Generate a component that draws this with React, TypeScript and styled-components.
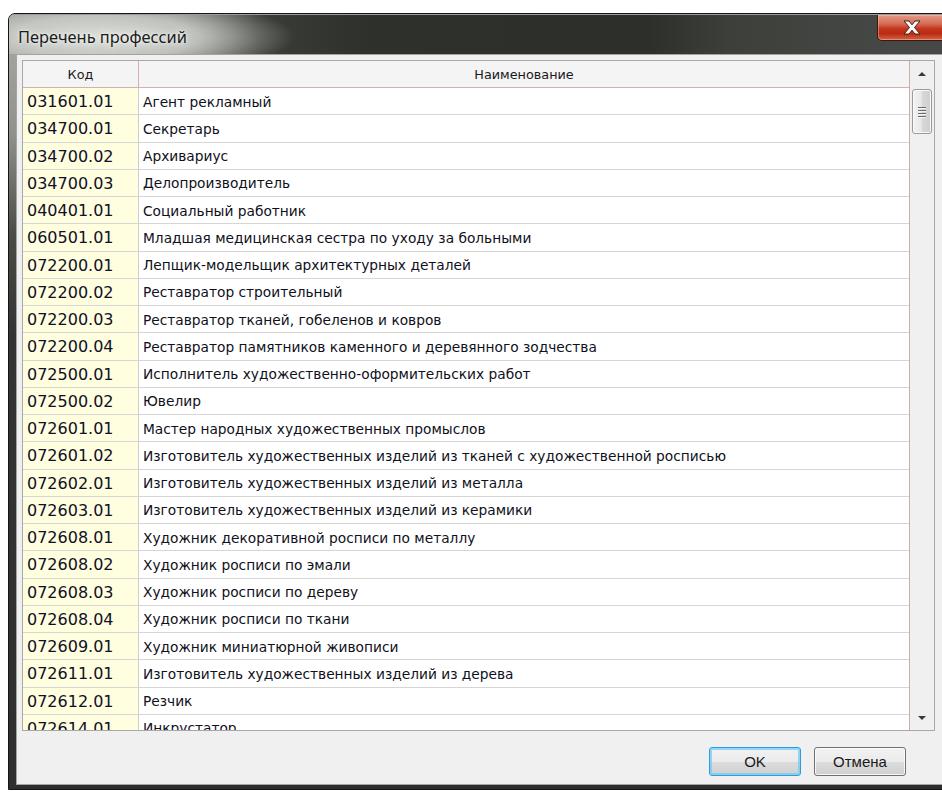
import React from 'react'
import styled, { createGlobalStyle } from 'styled-components'

interface Profession {
    code: string
    name: string
}

const professions: Profession[] = [
    { code: '031601.01', name: 'Агент рекламный' },
    { code: '034700.01', name: 'Секретарь' },
    { code: '034700.02', name: 'Архивариус' },
    { code: '034700.03', name: 'Делопроизводитель' },
    { code: '040401.01', name: 'Социальный работник' },
    { code: '060501.01', name: 'Младшая медицинская сестра по уходу за больными' },
    { code: '072200.01', name: 'Лепщик-модельщик архитектурных деталей' },
    { code: '072200.02', name: 'Реставратор строительный' },
    { code: '072200.03', name: 'Реставратор тканей, гобеленов и ковров' },
    { code: '072200.04', name: 'Реставратор памятников каменного и деревянного зодчества' },
    { code: '072500.01', name: 'Исполнитель художественно-оформительских работ' },
    { code: '072500.02', name: 'Ювелир' },
    { code: '072601.01', name: 'Мастер народных художественных промыслов' },
    { code: '072601.02', name: 'Изготовитель художественных изделий из тканей с художественной росписью' },
    { code: '072602.01', name: 'Изготовитель художественных изделий из металла' },
    { code: '072603.01', name: 'Изготовитель художественных изделий из керамики' },
    { code: '072608.01', name: 'Художник декоративной росписи по металлу' },
    { code: '072608.02', name: 'Художник росписи по эмали' },
    { code: '072608.03', name: 'Художник росписи по дереву' },
    { code: '072608.04', name: 'Художник росписи по ткани' },
    { code: '072609.01', name: 'Художник миниатюрной живописи' },
    { code: '072611.01', name: 'Изготовитель художественных изделий из дерева' },
    { code: '072612.01', name: 'Резчик' },
    { code: '072614.01', name: 'Инкрустатор' },
]

const GlobalStyle = createGlobalStyle`
    html, body {
        margin: 0;
        padding: 0;
        background: #ffffff;
        overflow: hidden;
    }
`

const App: React.FC = () => {
    return (
        <>
            <GlobalStyle />
            <Page>
                <Window>
                    <TitleBar>
                        <Title>Перечень профессий</Title>
                        <CloseButton>
                            <svg width="20" height="15" viewBox="0 0 20 15">
                                <path
                                    d="M2 1h5l3 3.8L13 1h5l-5.5 6.5L18 14h-5l-3-3.8L7 14H2l5.5-6.5z"
                                    fill="#ffffff"
                                    stroke="#4a1a10"
                                    strokeWidth="1"
                                    strokeLinejoin="round"
                                />
                            </svg>
                        </CloseButton>
                    </TitleBar>
                    <Client>
                        <GridBox>
                            <TableArea>
                                <HeaderRow>
                                    <HeaderCell>Код</HeaderCell>
                                    <HeaderCell>Наименование</HeaderCell>
                                </HeaderRow>
                                {professions.map(p => (
                                    <Row key={p.code}>
                                        <CodeCell>{p.code}</CodeCell>
                                        <NameCell>{p.name}</NameCell>
                                    </Row>
                                ))}
                            </TableArea>
                            <ScrollBar>
                                <ArrowButton>
                                    <Arrow direction="up" />
                                </ArrowButton>
                                <Thumb>
                                    <Grip />
                                    <Grip />
                                    <Grip />
                                    <Grip />
                                </Thumb>
                                <Track />
                                <ArrowButton>
                                    <Arrow direction="down" />
                                </ArrowButton>
                            </ScrollBar>
                        </GridBox>
                        <ButtonRow>
                            <DialogButton isDefault>OK</DialogButton>
                            <DialogButton>Отмена</DialogButton>
                        </ButtonRow>
                    </Client>
                </Window>
            </Page>
        </>
    )
}

const Page = styled.div`
    width: 942px;
    height: 792px;
    padding: 13px 0 0 8px;
    box-sizing: border-box;
    overflow: hidden;
`

const Window = styled.div`
    width: 946px;
    height: 777px;
    display: flex;
    flex-direction: column;
    box-sizing: border-box;
    border: 1px solid #151515;
    border-radius: 7px 7px 0 0;
    overflow: hidden;
    background: linear-gradient(180deg, #a9aca7 0, #8e918c 120px, #4a4c48 220px, #333532 320px, #2e302d 100%);
`

const TitleBar = styled.div`
    height: 40px;
    flex: none;
    display: flex;
    align-items: flex-start;
    box-sizing: border-box;
    border-top: 1px solid #9a9d98;
    background:
        radial-gradient(ellipse 190px 42px at 95px 22px, rgba(222, 225, 219, 0.97) 0, rgba(205, 208, 202, 0.85) 50%, rgba(190, 193, 188, 0.35) 80%, rgba(190, 193, 188, 0) 100%),
        linear-gradient(90deg, #8f938d 0, #6d716b 170px, #3a3d38 250px, #2d302b 360px, #2c2f2a 640px, #3c3f3a 720px, #464845 880px);
`

const Title = styled.div`
    margin: 10px 0 0 9px;
    font-family: "Noto Sans", "DejaVu Sans", sans-serif;
    font-size: 16.4px;
    color: #1c1c1c;
    text-shadow: 0 0 8px rgba(255, 255, 255, 0.9), 0 0 3px rgba(255, 255, 255, 0.8);
`

const CloseButton = styled.div`
    margin: 0 6px 0 auto;
    width: 70px;
    height: 26px;
    box-sizing: border-box;
    display: flex;
    align-items: center;
    justify-content: center;
    border: 1px solid #3d1710;
    border-top: none;
    border-radius: 0 0 5px 5px;
    background: linear-gradient(180deg, #e49a88 0, #d56d55 35%, #c3351c 55%, #b92c14 75%, #d36645 100%);
    box-shadow: inset 0 0 0 1px rgba(255, 200, 180, 0.45);
`

const Client = styled.div`
    flex: 1;
    display: flex;
    flex-direction: column;
    margin: 0 7px 4px 7px;
    padding: 5px 10px 0 5px;
    background: #f0f0f0;
    border: 1px solid #a3a3a3;
`

const GridBox = styled.div`
    height: 671px;
    flex: none;
    display: flex;
    box-sizing: border-box;
    border: 1px solid #a8a8a8;
    background: #ffffff;
`

const TableArea = styled.div`
    flex: 1;
    overflow: hidden;
    border-right: 1px solid #d2a9a9;
`

const cellColumns = `
    display: grid;
    grid-template-columns: 116px 1fr;
`

const HeaderRow = styled.div`
    ${cellColumns}
    height: 27px;
    box-sizing: border-box;
    border-bottom: 1px solid #d6b0b0;
    background: #f4f4f4;
`

const HeaderCell = styled.div`
    display: flex;
    align-items: center;
    justify-content: center;
    font-family: "DejaVu Sans", sans-serif;
    font-size: 12.8px;
    color: #1a1a1a;

    &:first-child {
        border-right: 1px solid #d6b0b0;
    }
`

const Row = styled.div`
    ${cellColumns}
    height: 27.25px;
    box-sizing: border-box;
    border-bottom: 1px solid #d6d6d6;
`

const CodeCell = styled.div`
    display: flex;
    align-items: center;
    padding: 1px 0 0 4px;
    background: #fffede;
    border-right: 1px solid #cfcfcf;
    font-family: "DejaVu Sans", sans-serif;
    font-size: 16px;
    color: #101028;
    white-space: nowrap;
`

const NameCell = styled.div`
    display: flex;
    align-items: center;
    padding: 1px 0 0 4px;
    font-family: "DejaVu Sans", sans-serif;
    font-size: 13.75px;
    color: #101020;
    white-space: nowrap;
`

const ScrollBar = styled.div`
    width: 24px;
    flex: none;
    display: flex;
    flex-direction: column;
    align-items: center;
    background: #f0f0f0;
`

const ArrowButton = styled.div`
    height: 25px;
    width: 100%;
    flex: none;
    display: flex;
    align-items: center;
    justify-content: center;
`

const Arrow = styled.div<{ direction: 'up' | 'down' }>`
    width: 0;
    height: 0;
    border-left: 4px solid transparent;
    border-right: 4px solid transparent;
    ${(props) => props.direction === 'up'
        ? 'border-bottom: 4px solid #3a3a3a;'
        : 'border-top: 4px solid #3a3a3a;'}
`

const Thumb = styled.div`
    margin-top: 3px;
    width: 20px;
    height: 45px;
    flex: none;
    box-sizing: border-box;
    display: flex;
    flex-direction: column;
    align-items: center;
    justify-content: center;
    gap: 2px;
    border: 1px solid #9a9a9a;
    border-radius: 3px;
    background: linear-gradient(90deg, #f3f3f3 0, #e8e8e8 45%, #d6d6d6 55%, #cfcfcf 100%);
    box-shadow: inset 0 0 0 1px rgba(255, 255, 255, 0.8);
`

const Grip = styled.div`
    width: 8px;
    height: 1px;
    background: #6a6a6a;
    box-shadow: 0 1px 0 #f4f4f4;
`

const Track = styled.div`
    flex: 1;
`

const ButtonRow = styled.div`
    flex: 1;
    display: flex;
    justify-content: flex-end;
    align-items: flex-start;
    gap: 13px;
    padding: 16px 29px 0 0;
`

const DialogButton = styled.div<{ isDefault?: boolean }>`
    width: 92px;
    height: 29px;
    box-sizing: border-box;
    display: flex;
    align-items: center;
    justify-content: center;
    border-radius: 3px;
    border: 1px solid ${(props) => props.isDefault ? '#3399dd' : '#707070'};
    background: linear-gradient(180deg, #f2f2f2 0, #ebebeb 50%, #dddddd 51%, #cfcfcf 100%);
    box-shadow: inset 0 0 0 ${(props) => props.isDefault ? '2px rgba(110, 205, 245, 0.75)' : '1px rgba(255, 255, 255, 0.8)'};
    font-family: "Liberation Sans", "DejaVu Sans", sans-serif;
    font-size: 15px;
    color: #1a1a1a;
`

export default App
